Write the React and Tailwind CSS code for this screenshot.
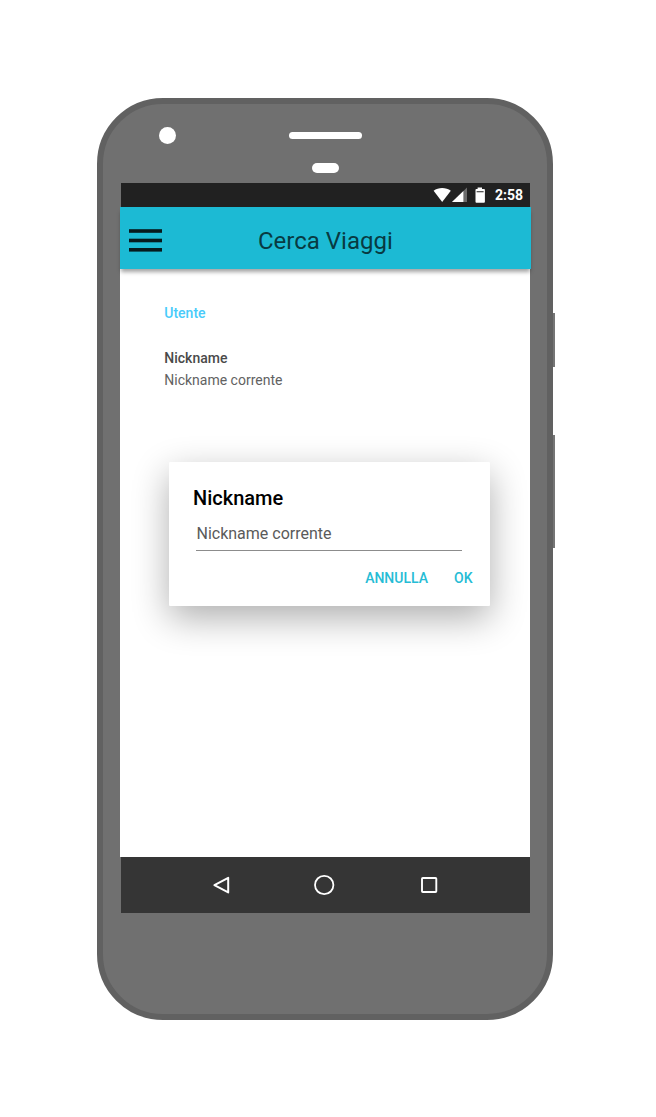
function StatusBar() {
  return (
    <div className="ml-px flex h-6 w-[409px] items-center justify-end bg-[#212121] pr-[7px]">
      <svg className="h-6 w-[56px] shrink-0" viewBox="0 0 56 24">
        <path d="M0.6 7.7 C5.3 4.2 13.1 4.2 17.8 7.7 L9.2 19 Z" fill="#fff" />
        <path d="M34 4.6 V19 H19 Z" fill="#6b6b6b" />
        <path d="M30.4 8 V19 H19 Z" fill="#fff" />
        <path d="M44.6 4.4 h4.4 v1.5 h2 q0.9 0 0.9 0.9 v12 q0 0.9 -0.9 0.9 h-7.6 q-0.9 0 -0.9 -0.9 v-12 q0 -0.9 0.9 -0.9 h1.2 z" fill="#fff" />
        <path d="M43.6 8.1 h7 v1.2 h-7 z" fill="#444" />
      </svg>
      <span className="ml-[6px] text-[14px] leading-6 font-bold text-white">2:58</span>
    </div>
  );
}

function AppBar() {
  return (
    <header className="relative flex h-[62px] w-[411px] items-start bg-[#1cbad4] pl-[9px] shadow-[0_4px_4px_-1px_rgba(0,0,0,0.36)]">
      <svg className="mt-[22px] h-[23px] w-[33px]" viewBox="0 0 33 23" fill="#061a1d">
        <rect y="0.2" width="33" height="3.6" />
        <rect y="9.7" width="33" height="3.6" />
        <rect y="19" width="33" height="3.6" />
      </svg>
      <h1 className="mt-[18px] ml-[96px] text-[24px] leading-8 font-normal whitespace-nowrap text-[#083a42]">Cerca Viaggi</h1>
    </header>
  );
}

function Dialog() {
  return (
    <section className="mt-[72px] ml-[49px] flex h-[144px] w-[321px] flex-col rounded-[1px] bg-white pt-6 shadow-[0_12px_36px_rgba(0,0,0,0.32)]">
      <h2 className="ml-[23.5px] text-[20px] leading-6 font-medium text-black">Nickname</h2>
      <div className="mt-[10px] ml-[27px] h-[31px] w-[266px] border-b border-[#8c8c8c] text-[16px] leading-[27px] text-[#5a5a5a]">
        Nickname corrente
      </div>
      <div className="mt-[17px] flex justify-end gap-[26px] pr-[18px] text-[14px] leading-5 font-medium text-[#26bcd5]">
        <button>ANNULLA</button>
        <button>OK</button>
      </div>
    </section>
  );
}

function NavBar() {
  return (
    <nav className="ml-px h-[56px] w-[409px] bg-[#353535]">
      <svg className="h-[56px] w-[409px]" viewBox="0 0 409 56" fill="none" stroke="#fff" strokeWidth="2">
        <path d="M107.2 20.8 V35.4 L93.4 28.1 Z" strokeLinejoin="round" />
        <circle cx="203.2" cy="28" r="9.2" strokeWidth="1.8" />
        <rect x="301" y="21" width="14.3" height="14" rx="0.8" strokeWidth="1.9" />
      </svg>
    </nav>
  );
}

export default function App() {
  return (
    <main className="flex h-[1117px] w-[656px] items-start overflow-hidden bg-white pt-[98px] pl-[97.3px] font-['Roboto',sans-serif]">
      <div className="flex h-[922px] w-[456px] shrink-0 flex-col rounded-[66px] border-[6px] border-[#616161] bg-[#707070] pl-[16.7px]">
        <div className="flex h-[79px] flex-col pt-[23px]">
          <div className="flex h-[17px] items-center">
            <div className="ml-[39px] h-[17px] w-[17px] rounded-full bg-white" />
            <div className="ml-[113.3px] h-[7px] w-[73px] rounded-full bg-white" />
          </div>
          <div className="mt-[19px] ml-[192.3px] h-[10px] w-[27px] rounded-full bg-white" />
        </div>
        <StatusBar />
        <AppBar />
        <div className="ml-[0.5px] h-[588px] w-[410px] bg-white pt-[34px]">
          <div className="ml-[43.8px] text-[14px] leading-5 font-medium text-[#48cbfa]">Utente</div>
          <div className="mt-[25px] ml-[43.8px] text-[14px] leading-5 font-medium text-[#4a4a4a]">Nickname</div>
          <div className="mt-[2px] ml-[43.8px] text-[14px] leading-5 text-[#626262]">Nickname corrente</div>
          <Dialog />
        </div>
        <NavBar />
      </div>
      <div className="flex shrink-0 flex-col pt-[215px]">
        <div className="h-[54px] w-[2px] bg-[#757575]" />
        <div className="mt-[68px] h-[113px] w-[2px] bg-[#757575]" />
      </div>
    </main>
  );
}
